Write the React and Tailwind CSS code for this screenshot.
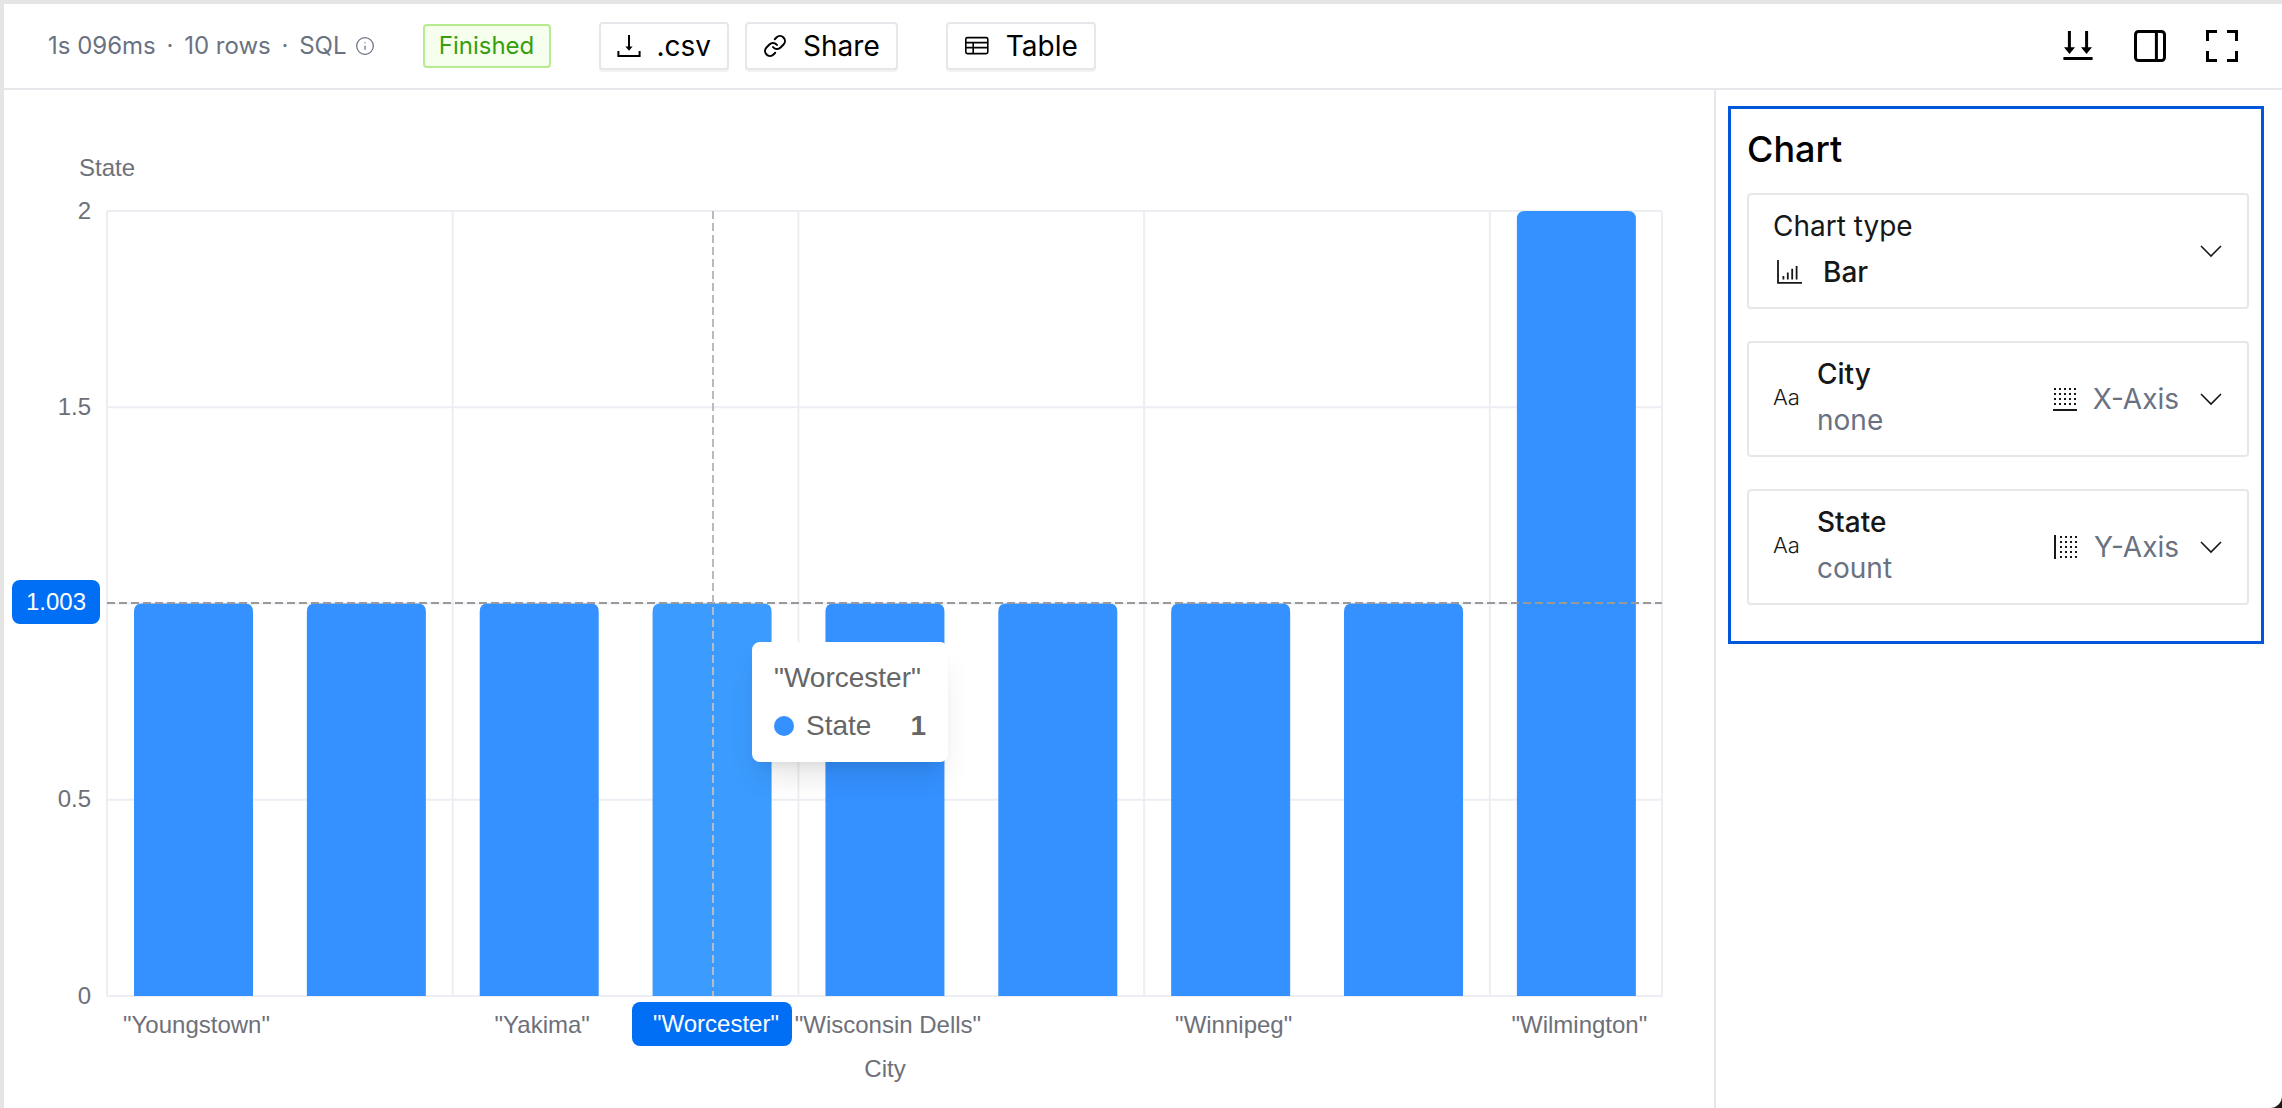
import React from "react";
import { Info, Link } from "lucide-react";

// chart numbers are in px of the chart pane
const PLOT = { left: 51.5, right: 829, top: 60.5, bottom: 453 };
const BAR_W = 59.5;
const BAR_STEP = 86.43;
const UNIT = (PLOT.bottom - PLOT.top) / 2;

const bars = [1, 1, 1, 1, 1, 1, 1, 1, 2];
const cityLabels = {
  0: '"Youngstown"',
  2: '"Yakima"',
  4: '"Wisconsin Dells"',
  6: '"Winnipeg"',
  8: '"Wilmington"',
};
const yTicks = ["2", "1.5", "1", "0.5", "0"];
const HOVER = 3;

function barPath(x, top) {
  const r = 4;
  return `M${x} ${PLOT.bottom}V${top + r}Q${x} ${top} ${x + r} ${top}H${x + BAR_W - r}Q${x + BAR_W} ${top} ${x + BAR_W} ${top + r}V${PLOT.bottom}Z`;
}

function BarChart() {
  return (
    <svg width="855" height="509" className="font-['Liberation_Sans',sans-serif] text-xs">
      {yTicks.map((t, i) => (
        <line key={t} x1={PLOT.left} x2={PLOT.right} y1={PLOT.top + i * (UNIT / 2)} y2={PLOT.top + i * (UNIT / 2)} stroke="#eceef3" />
      ))}
      {[0, 1, 2, 3, 4].map((i) => (
        <line key={i} x1={PLOT.left + i * 172.86} x2={PLOT.left + i * 172.86} y1={PLOT.top} y2={PLOT.bottom} stroke="#eceef3" />
      ))}
      <line x1={PLOT.right} x2={PLOT.right} y1={PLOT.top} y2={PLOT.bottom} stroke="#eceef3" />

      {bars.map((v, i) => (
        <path key={i} d={barPath(65 + i * BAR_STEP, PLOT.bottom - v * UNIT)} fill={i === HOVER ? "#3b9bff" : "#3491ff"} />
      ))}

      <text x="37.5" y="38.5" dominantBaseline="central" fill="#6e7079">State</text>
      {/* the "1" tick sits under the 1.003 pointer label */}
      {yTicks.map((t, i) => t !== "1" && (
        <text key={t} x="43.5" y={PLOT.top - 0.5 + i * (UNIT / 2)} textAnchor="end" dominantBaseline="central" fill="#6e7079">{t}</text>
      ))}
      {Object.entries(cityLabels).map(([i, label]) => (
        <text key={i} x={96.25 + i * BAR_STEP} y="467" textAnchor="middle" dominantBaseline="central" fill="#6e7079">{label}</text>
      ))}
      <text x="440.5" y="489" textAnchor="middle" dominantBaseline="central" fill="#6e7079">City</text>

      <line x1={PLOT.left} x2={PLOT.right} y1="256.5" y2="256.5" stroke="#9a9a9a" strokeDasharray="4 2" />
      <line x1="354.5" x2="354.5" y1={PLOT.top} y2={PLOT.bottom} stroke="#b8bbc2" strokeDasharray="4 2" />
    </svg>
  );
}

function Chevron() {
  return (
    <svg width="12" height="12" viewBox="0 0 12 12" fill="none" stroke="currentColor" strokeWidth="0.8" className="shrink-0 text-neutral-900">
      <path d="M1 3.5L6 8.5L11 3.5" />
    </svg>
  );
}

function DownloadIcon() {
  return (
    <svg width="12" height="12" viewBox="0 0 12 12" fill="none" stroke="currentColor">
      <path d="M6 .5V7" />
      <path d="M4.2 6.2H7.8L6 8.4Z" fill="currentColor" stroke="none" />
      <path d="M.7 8.5V11H11.3V8.5" />
    </svg>
  );
}

function TableIcon() {
  return (
    <svg width="13" height="10" viewBox="0 0 13 10" fill="none" stroke="currentColor" strokeWidth="0.8">
      <rect x="0.9" y="0.8" width="11" height="8" rx="0.8" />
      <path d="M.9 3.3H11.9M.9 5.8H11.9M4.6 3.3V8.8" />
    </svg>
  );
}

function ScrollDownIcon() {
  return (
    <svg width="16" height="16" viewBox="0 0 16 16" fill="none" stroke="currentColor" strokeWidth="1.5">
      <path d="M3.7 .5V9M12.3 .5V9M.7 14.3H15.3" />
      <path d="M1 8.6H6.5L3.75 12ZM9.5 8.6H15L12.25 12Z" fill="currentColor" stroke="none" />
    </svg>
  );
}

function PanelIcon() {
  return (
    <svg width="16" height="16" viewBox="0 0 16 16" fill="none" stroke="currentColor" strokeWidth="1.5">
      <rect x="0.75" y="0.75" width="14.5" height="14.5" rx="1.5" />
      <path d="M11.2 .75V15.25" />
    </svg>
  );
}

function FullscreenIcon() {
  return (
    <svg width="16" height="16" viewBox="0 0 16 16" fill="none" stroke="currentColor" strokeWidth="1.5">
      <path d="M.75 5.5V.75H5.5M10.5 .75H15.25V5.5M15.25 10.5V15.25H10.5M5.5 15.25H.75V10.5" />
    </svg>
  );
}

function BarIcon() {
  return (
    <svg width="13" height="12" viewBox="0 0 13 12" fill="none" stroke="currentColor" strokeWidth="0.9" className="ml-0.5">
      <path d="M.5 0V11.4H12.5" />
      <path d="M3.2 9.8V8M5.4 9.8V6.2M7.6 9.8V4.4M9.8 9.8V3" />
    </svg>
  );
}

// dotted square with one solid edge, used for both axes
function AxisIcon({ axis }) {
  const isY = axis === "y";
  const dots = [];
  for (let r = 0; r < (isY ? 5 : 4); r++) {
    for (let c = 0; c < (isY ? 4 : 5); c++) {
      dots.push(<rect key={`${r}-${c}`} x={(isY ? 3 : 0.5) + c * 2.5} y={0.5 + r * 2.5} width="1" height="1" />);
    }
  }
  return (
    <svg width="12" height="12" viewBox="0 0 12 12" fill="currentColor" className="shrink-0 text-neutral-900">
      {dots}
      {isY ? <rect x="0" y="0" width="1" height="12" /> : <rect x="0" y="11" width="12" height="1" />}
    </svg>
  );
}

function ToolButton({ icon, children }) {
  return (
    <button className="flex h-6 items-center gap-2 rounded-xs border border-gray-200 bg-white px-2 text-sm text-black shadow-2xs">
      {icon}
      {children}
    </button>
  );
}

function FieldCard({ name, sub, axis, label }) {
  return (
    <div className="flex h-14.5 items-center rounded-xs border border-gray-200 px-3">
      <span className="-mt-0.5 w-3.5 text-[11px] font-light text-neutral-900">Aa</span>
      <div className="ml-2 flex flex-1 flex-col gap-px pb-0.5 text-sm leading-5.5">
        <div className="font-medium text-neutral-900">{name}</div>
        <div className="text-gray-500">{sub}</div>
      </div>
      <div className="flex items-center text-sm text-gray-500">
        <AxisIcon axis={axis} />
        <span className="mr-2.5 ml-2">{label}</span>
        <Chevron />
      </div>
    </div>
  );
}

export default function App() {
  return (
    <div className="h-[554px] w-[1141px] bg-stone-900 font-['Inter',sans-serif] [zoom:2]">
      <div className="flex h-full flex-col overflow-hidden rounded-br-md border-t-2 border-l-2 border-neutral-200 bg-white">
        {/* Barra superior */}
        <header className="flex h-[43px] shrink-0 items-center gap-6 border-b border-gray-200 pr-5.5 pl-5.5">
          <div className="flex items-center gap-1 text-xs text-gray-500">
            <span>
              1s 096ms <span className="mx-0.5">·</span> 10 rows <span className="mx-0.5">·</span> SQL
            </span>
            <Info size={10} strokeWidth={1.5} />
          </div>
          <span className="w-16 rounded-xs border border-[#b7eb8f] bg-[#f6ffed] py-0.5 text-center text-xs text-[#389e0d]">Finished</span>
          <div className="flex items-center gap-2">
            <ToolButton icon={<DownloadIcon />}>.csv</ToolButton>
            <ToolButton icon={<Link size={12} strokeWidth={2} />}>Share</ToolButton>
          </div>
          <ToolButton icon={<TableIcon />}>Table</ToolButton>
          <div className="ml-auto flex items-center gap-5 text-black">
            <ScrollDownIcon />
            <PanelIcon />
            <FullscreenIcon />
          </div>
        </header>

        <div className="flex min-h-0 flex-1">
          {/* Grafica */}
          <div className="relative w-[855px] shrink-0">
            <BarChart />

            <div className="absolute top-61.25 left-1 flex h-5.5 w-11 items-center justify-center rounded-sm bg-[#006ff5] font-['Liberation_Sans',sans-serif] text-xs text-white">1.003</div>
            <div className="absolute top-114 left-78.5 flex h-5.5 w-20 items-center justify-center rounded-sm bg-[#006ff5] pl-1 font-['Liberation_Sans',sans-serif] text-xs text-white">"Worcester"</div>

            <div className="absolute top-69 left-93.5 flex w-24.5 flex-col gap-2.5 rounded-sm border border-white bg-white p-2.5 font-['Liberation_Sans',sans-serif] text-sm leading-none text-[#666] shadow-lg">
              <div>"Worcester"</div>
              <div className="flex items-center">
                <span className="mr-1.5 size-2.5 rounded-full bg-[#3491ff]" />
                <span>State</span>
                <span className="ml-auto font-bold">1</span>
              </div>
            </div>
          </div>

          {/* Panel de configuracion */}
          <aside className="flex-1 border-l border-gray-200">
            <div className="mt-2 ml-1.5 w-67 border-[1.5px] border-[#0057d9] pt-1.5 pr-1.5 pb-4.5 pl-2">
              <h2 className="mb-2 text-lg leading-7 font-medium text-black">Chart</h2>
              <div className="flex flex-col gap-4">
                <div className="flex h-14.5 items-center justify-between rounded-xs border border-gray-200 px-3">
                  <div className="flex flex-col gap-px pb-0.5 text-sm leading-5.5 text-neutral-900">
                    <div>Chart type</div>
                    <div className="flex items-center gap-2.5 font-medium">
                      <BarIcon />
                      Bar
                    </div>
                  </div>
                  <Chevron />
                </div>
                <FieldCard name="City" sub="none" axis="x" label="X-Axis" />
                <FieldCard name="State" sub="count" axis="y" label="Y-Axis" />
              </div>
            </div>
          </aside>
        </div>
      </div>
    </div>
  );
}
